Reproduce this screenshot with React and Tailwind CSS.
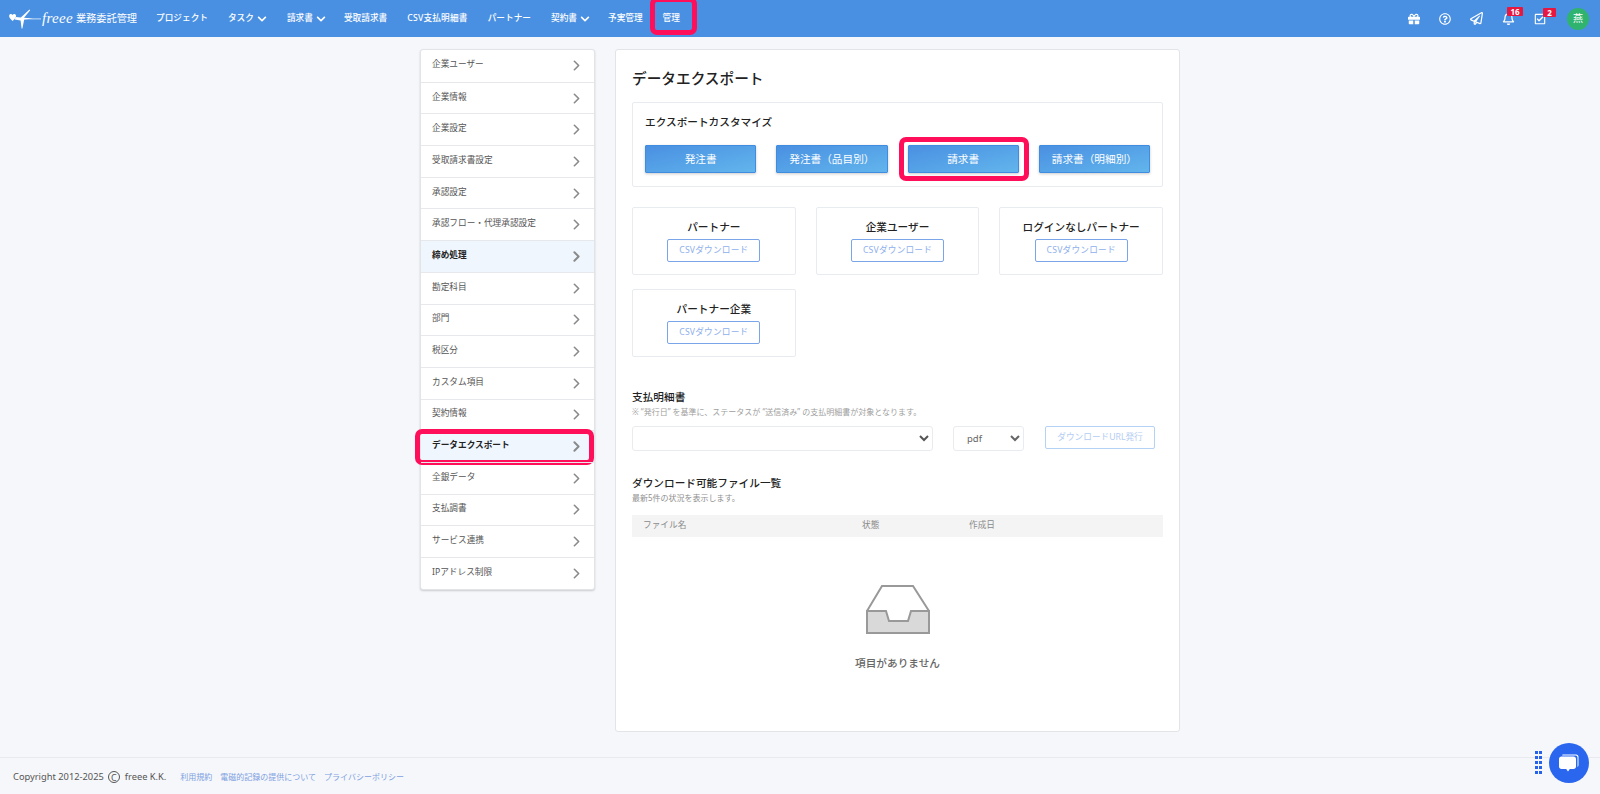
import { ChevronRight } from "lucide-react";
import {
  FaChevronDown,
  FaGift,
  FaRegBell,
  FaRegCheckSquare,
  FaRegPaperPlane,
  FaRegQuestionCircle,
} from "react-icons/fa";

const navItems = [
  { label: "プロジェクト" },
  { label: "タスク", caret: true },
  { label: "請求書", caret: true, tweak: "-mr-[2px]" },
  { label: "受取請求書" },
  { label: "CSV支払明細書", tweak: "tracking-[0.2px]" },
  { label: "パートナー" },
  { label: "契約書", caret: true, tweak: "-mr-[2px]" },
  { label: "予実管理" },
  { label: "管理", marked: true },
];

const sideItems = [
  { label: "企業ユーザー" },
  { label: "企業情報" },
  { label: "企業設定" },
  { label: "受取請求書設定" },
  { label: "承認設定" },
  { label: "承認フロー・代理承認設定" },
  { label: "締め処理", active: true },
  { label: "勘定科目" },
  { label: "部門" },
  { label: "税区分" },
  { label: "カスタム項目" },
  { label: "契約情報" },
  { label: "データエクスポート", active: true, marked: true },
  { label: "全銀データ" },
  { label: "支払調書" },
  { label: "サービス連携" },
  { label: "IPアドレス制限" },
];

const exportButtons = [
  { label: "発注書" },
  { label: "発注書（品目別）" },
  { label: "請求書", marked: true },
  { label: "請求書（明細別）" },
];

const csvCards = ["パートナー", "企業ユーザー", "ログインなしパートナー", "パートナー企業"];

const Bird = () => (
  <svg viewBox="0 0 32 20" className="w-[32px] h-[20px] shrink-0" fill="#fff">
    {/* heart shaped tail */}
    <path d="M0.2 6.4C0.8 4.8 2.6 4.7 3.5 5.9 4.4 4.7 6.4 4.9 7 6.4 7.6 8 5.6 10.4 3.6 12 1.6 10.4 -0.4 8 0.2 6.4Z" />
    {/* body and wings */}
    <path d="M6.8 8 11.8 8.4 20.5 0.6 21.2 1.2 15 8.8 24 9.6 15.2 10.6 13.4 19.6 12.6 19.4 11.6 11.6 5.6 10.6Z" />
    <path d="M15 9.9H32" stroke="#fff" strokeWidth="0.7" />
  </svg>
);

const InboxIcon = () => (
  <svg viewBox="0 0 64 50" className="w-[64px] h-[50px]">
    <path d="M1 26 16 1H47L63 26" fill="none" stroke="#999" strokeWidth="2" />
    <path d="M1 26H20L23 36H42L45 26H63V48H1Z" fill="#d9d9d9" stroke="#999" strokeWidth="2" />
  </svg>
);

const Mark = ({ className }) => (
  <span className={`absolute border-[5px] border-[#ff0f5a] rounded-[7px] pointer-events-none ${className}`} />
);

const App = () => {
  return (
    <div className="relative min-h-screen bg-[#f5f7fb] text-[#555] font-['Noto_Sans','Noto_Sans_CJK_JP',sans-serif]">
      {/* Header */}
      <header className="flex items-center h-[37px] bg-[#4a90e2] text-white pl-[9px] pr-[11px]">
        <div className="flex items-center w-[147px] shrink-0">
          <Bird />
          <span className="font-['Liberation_Serif',serif] italic text-[15px] leading-none ml-[1px] tracking-[0.3px]">freee</span>
          <span className="text-[10.2px] leading-none ml-[3px] whitespace-nowrap">業務委託管理</span>
        </div>
        <nav className="flex items-center gap-[20px] text-[8.67px] font-medium">
          {navItems.map((item) => (
            <div key={item.label} className={`relative flex items-center whitespace-nowrap ${item.tweak || ""}`}>
              {item.label}
              {item.caret && <FaChevronDown className="ml-[3px] w-[10px] h-[10px]" />}
              {item.marked && <Mark className="-left-[13px] -right-[17px] -top-[15px] -bottom-[10px]" />}
            </div>
          ))}
        </nav>
        <div className="ml-auto flex items-center">
          <FaGift className="w-[12px] h-[12px]" />
          <FaRegQuestionCircle className="w-[12px] h-[12px] ml-[19px]" />
          <FaRegPaperPlane className="w-[13px] h-[13px] ml-[19px]" />
          <div className="relative ml-[19px]">
            <FaRegBell className="w-[13px] h-[13px]" />
            <span className="absolute -top-[5px] left-[5px] w-[16px] h-[9px] rounded-[1px] bg-[#e8173f] text-[8px] font-bold leading-[9px] text-center">16</span>
          </div>
          <div className="relative ml-[19px]">
            <FaRegCheckSquare className="w-[12px] h-[12px]" />
            <span className="absolute -top-[5px] left-[9px] w-[13px] h-[9px] rounded-[1px] bg-[#e8173f] text-[8px] font-bold leading-[9px] text-center">2</span>
          </div>
          <div className="flex items-center justify-center w-[22px] h-[22px] ml-[21px] rounded-full bg-[#2fb36f] text-[10px]">燕</div>
        </div>
      </header>

      <div className="flex justify-center items-start gap-[20px] pt-[12px]">
        {/* Side menu */}
        <aside className="w-[175px] shrink-0 bg-white border border-[#e2e4e8] rounded-[3px] shadow-[0_1px_2px_rgba(0,0,0,0.18)]">
          {sideItems.map((item, index) => (
            <div
              key={item.label}
              className={`relative flex items-center justify-between h-[31.7px] pl-[11px] pr-[9px] text-[8.67px] ${
                index > 0 ? "border-t border-[#e6e8ec]" : ""
              } ${item.active ? "bg-[#eff6fe] text-[#222] font-bold" : ""}`}
            >
              <span className="-mt-[2px]">{item.label}</span>
              <ChevronRight className="w-[17px] h-[17px] text-[#8a8a8a]" strokeWidth={item.active ? 2.8 : 2.3} />
              {item.marked && <Mark className="-left-[6px] right-0 -top-[2px] -bottom-[3px]" />}
            </div>
          ))}
        </aside>

        {/* Main panel */}
        <main className="w-[565px] h-[683px] shrink-0 bg-white border border-[#e2e4e8] rounded-[3px] pt-[18px] px-[16px]">
          <h1 className="text-[14.67px] leading-[20px] font-medium text-[#222]">データエクスポート</h1>

          <section className="mt-[14px] h-[85px] border border-[#e8ecf0] rounded-[2px] pt-[11px] px-[12px]">
            <h2 className="text-[10.67px] leading-[16px] font-medium text-[#222]">エクスポートカスタマイズ</h2>
            <div className="flex gap-[20px] mt-[15px]">
              {exportButtons.map((button) => (
                <div
                  key={button.label}
                  className="relative flex items-center justify-center w-[111.5px] h-[28px] border border-[#3f8ce0] rounded-[1px] bg-gradient-to-br from-[#4a90e2] to-[#62b5ec] text-white text-[10.67px] shadow-[0_1px_3px_rgba(0,0,0,0.2)]"
                >
                  {button.label}
                  {button.marked && <Mark className="-left-[10px] -right-[11px] -top-[9px] -bottom-[9px]" />}
                </div>
              ))}
            </div>
          </section>

          <div className="grid grid-cols-3 gap-x-[20px] gap-y-[14px] mt-[20px]">
            {csvCards.map((title) => (
              <div key={title} className="flex flex-col items-center h-[68px] border border-[#e8ecf0] rounded-[2px] pt-[11px]">
                <div className="text-[10.67px] leading-[16px] font-medium text-[#222]">{title}</div>
                <button className="w-[93px] h-[23px] mt-[4px] border border-[#7aa5e8] rounded-[2px] text-[8.67px] tracking-[0.2px] text-[#8fb0ec] bg-white">
                  CSVダウンロード
                </button>
              </div>
            ))}
          </div>

          <h2 className="mt-[32px] text-[10.67px] leading-[16px] font-medium text-[#222]">支払明細書</h2>
          <p className="mt-[1px] text-[8px] leading-[12px] text-[#a0a0a0]">
            ※ “発行日” を基準に、ステータスが “送信済み” の支払明細書が対象となります。
          </p>
          <div className="flex items-start mt-[8px]">
            <select className="w-[301px] h-[25px] border border-[#e8ecf0] rounded-[3px] bg-white text-[9.5px]">
              <option></option>
            </select>
            <select className="w-[71px] h-[25px] ml-[20px] pl-[9px] border border-[#e8ecf0] rounded-[3px] bg-white text-[9.5px] text-[#666]">
              <option>pdf</option>
            </select>
            <button className="w-[110px] h-[23.5px] ml-[21px] -mt-[0.5px] border border-[#b4d2f6] rounded-[2px] text-[8.67px] text-[#b4cdf2] bg-white">
              ダウンロードURL発行
            </button>
          </div>

          <h2 className="mt-[24px] text-[10.67px] leading-[16px] font-medium text-[#222]">ダウンロード可能ファイル一覧</h2>
          <p className="mt-[1px] text-[8px] leading-[12px] text-[#8f8f8f]">最新5件の状況を表示します。</p>
          <div className="grid grid-cols-[219px_107px_1fr] items-center h-[21.5px] mt-[11px] pl-[11px] bg-[#f4f4f4] text-[8.67px] text-[#8a8a8a]">
            <span>ファイル名</span>
            <span>状態</span>
            <span>作成日</span>
          </div>

          <div className="flex flex-col items-center mt-[48px]">
            <InboxIcon />
            <p className="mt-[20px] text-[10.67px] leading-[16px] font-medium text-[#666]">項目がありません</p>
          </div>
        </main>
      </div>

      {/* Footer */}
      <footer className="flex items-center h-[37px] mt-[25px] px-[13px] pt-[2px] border-t border-[#e8eaef] text-[9.3px] text-[#555] whitespace-nowrap">
        <span>Copyright 2012-2025</span>
        <span className="flex items-center justify-center w-[12px] h-[12px] ml-[4px] rounded-full border border-[#555] text-[9px] leading-none">C</span>
        <span className="ml-[5px]">freee K.K.</span>
        <a className="ml-[14px] text-[8px] text-[#7f9fe0]">利用規約</a>
        <a className="ml-[8px] text-[8px] text-[#7f9fe0]">電磁的記録の提供について</a>
        <a className="ml-[8px] text-[8px] text-[#7f9fe0]">プライバシーポリシー</a>
      </footer>

      {/* Chat widget */}
      <div className="absolute right-[58px] bottom-[20px] grid grid-cols-2 gap-x-[1.5px] gap-y-[2px]">
        {Array.from({ length: 10 }).map((_, i) => (
          <span key={i} className="w-[3px] h-[3px] bg-[#2563eb]" />
        ))}
      </div>
      <div className="absolute right-[11px] bottom-[11px] flex items-center justify-center w-[40px] h-[40px] rounded-full bg-[#2b66ee]">
        <svg viewBox="0 0 24 24" className="w-[24px] h-[24px]" fill="#fff">
          <path d="M6 3.5H19C20.6 3.5 21.5 4.6 21.5 6V14C21.5 15 21 15.8 20.5 16V6.5C20.5 5 19.6 4.4 18 4.4H5.2C5.2 4 5.5 3.5 6 3.5Z" />
          <path d="M4.5 5.5H16.5C18.2 5.5 19 6.5 19 8V15.5C19 17 18 18 16.5 18H12.8L11 20.5 9.2 18H4.5C3 18 2 17 2 15.5V8C2 6.5 3 5.5 4.5 5.5Z" />
        </svg>
      </div>
    </div>
  );
};

export default App;
